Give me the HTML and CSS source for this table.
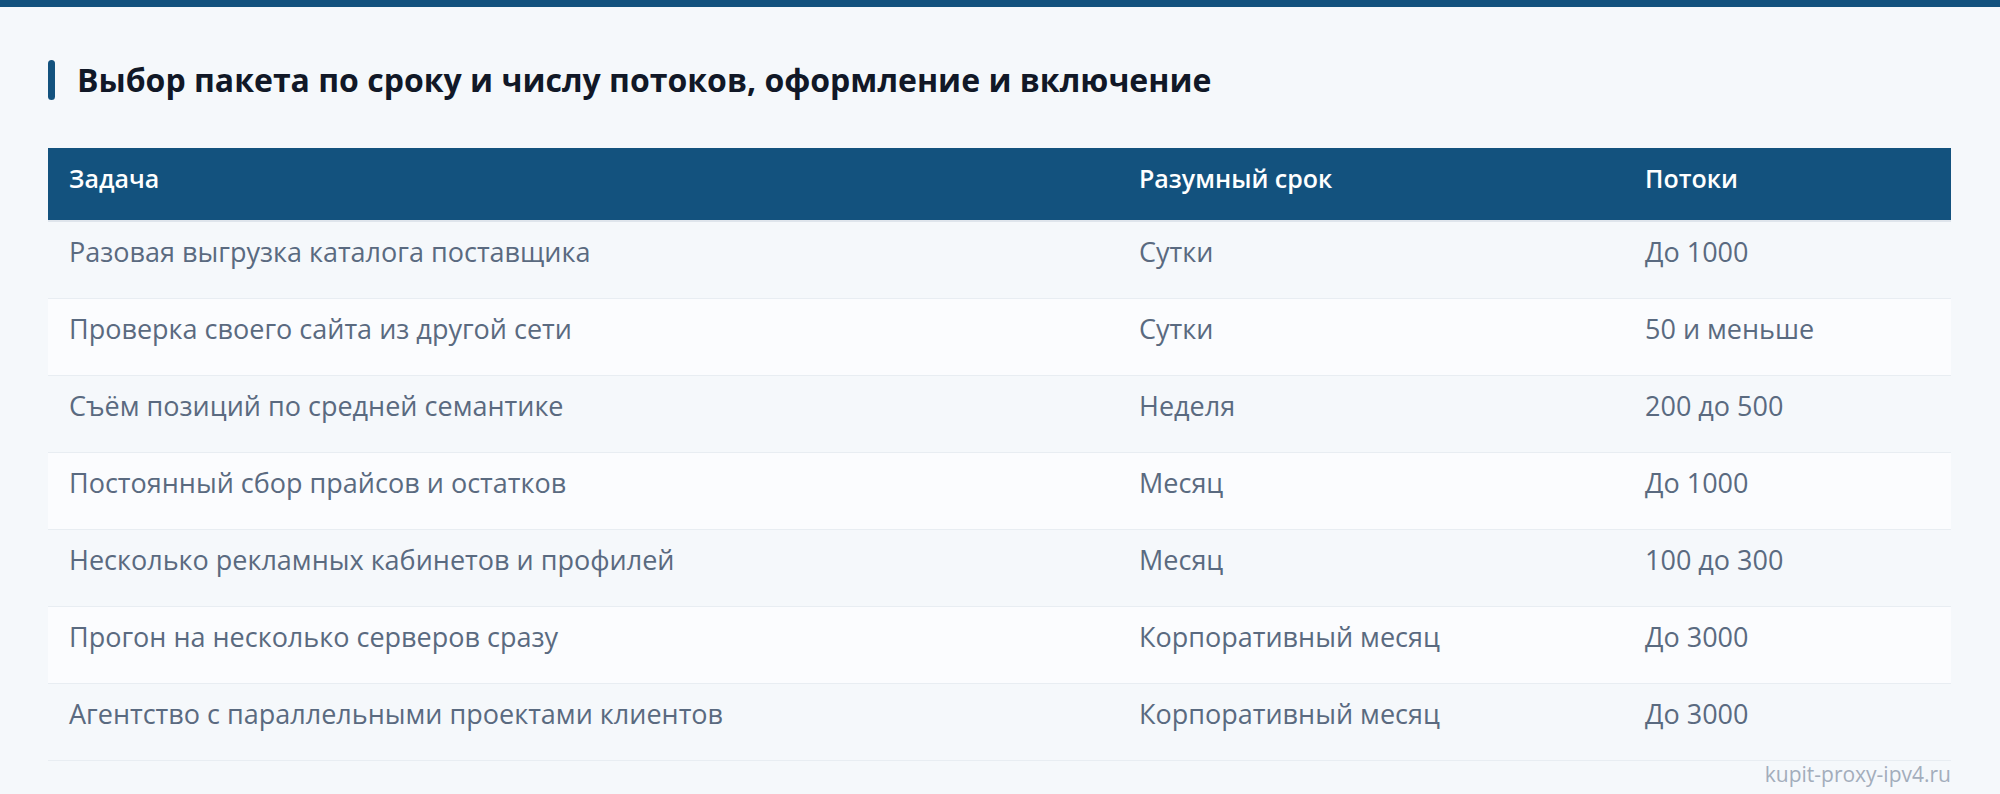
FILE: index.html
```html
<!DOCTYPE html>
<html lang="ru">
<head>
<meta charset="utf-8">
<title>Выбор пакета</title>
<link rel="stylesheet" href="styles.css">
</head>
<body>
<div class="topbar"></div>
<main class="wrap">
  <h2 class="title">Выбор пакета по сроку и числу потоков, оформление и включение</h2>
  <table class="grid">
    <colgroup>
      <col class="c1"><col class="c2"><col class="c3">
    </colgroup>
    <thead>
      <tr><th>Задача</th><th>Разумный срок</th><th>Потоки</th></tr>
    </thead>
    <tbody>
      <tr><td>Разовая выгрузка каталога поставщика</td><td>Сутки</td><td>До 1000</td></tr>
      <tr><td>Проверка своего сайта из другой сети</td><td>Сутки</td><td>50 и меньше</td></tr>
      <tr><td>Съём позиций по средней семантике</td><td>Неделя</td><td>200 до 500</td></tr>
      <tr><td>Постоянный сбор прайсов и остатков</td><td>Месяц</td><td>До 1000</td></tr>
      <tr><td>Несколько рекламных кабинетов и профилей</td><td>Месяц</td><td>100 до 300</td></tr>
      <tr><td>Прогон на несколько серверов сразу</td><td>Корпоративный месяц</td><td>До 3000</td></tr>
      <tr><td>Агентство с параллельными проектами клиентов</td><td>Корпоративный месяц</td><td>До 3000</td></tr>
    </tbody>
  </table>
  <div class="mark">kupit-proxy-ipv4.ru</div>
</main>
</body>
</html>
```
FILE: styles.css
```css
html, body {
  margin: 0;
  padding: 0;
  background: #f5f8fb;
}
body {
  font-family: "Open Sans", "Noto Sans", sans-serif;
  color: #5a6a80;
  height: 794px;
  overflow: hidden;
}
.topbar {
  height: 7px;
  background: #13527e;
}
.wrap {
  padding: 0 49px 0 48px;
}
.title {
  margin: 53px 0 0;
  height: 40px;
  display: flex;
  align-items: center;
  gap: 22px;
  font-size: 32px;
  font-weight: 700;
  color: #111827;
  line-height: 40px;
}
.title::before {
  content: "";
  width: 7px;
  height: 40px;
  border-radius: 4px;
  background: #13527e;
  flex: none;
}
.grid {
  margin-top: 48px;
  width: 100%;
  border-collapse: collapse;
  table-layout: fixed;
}
.c1 { width: 1070px; }
.c2 { width: 506px; }
.grid th {
  background: #13527e;
  color: #ffffff;
  font-weight: 600;
  font-size: 25px;
  line-height: 34px;
  text-align: left;
  vertical-align: top;
  padding: 13px 21px 25px;
  border-bottom: 2px solid #dfe5ec;
}
.grid td {
  font-size: 27px;
  line-height: 36px;
  vertical-align: top;
  padding: 12px 21px 28px;
  border-bottom: 1px solid #e8edf2;
  color: #5a6a80;
}
.grid tbody tr:nth-child(odd) td { background: #f5f8fb; }
.grid tbody tr:nth-child(even) td { background: #fbfcfe; }
.mark {
  text-align: right;
  font-size: 21px;
  color: #a3adbb;
  line-height: 26px;
  margin-top: 0;
}
```
